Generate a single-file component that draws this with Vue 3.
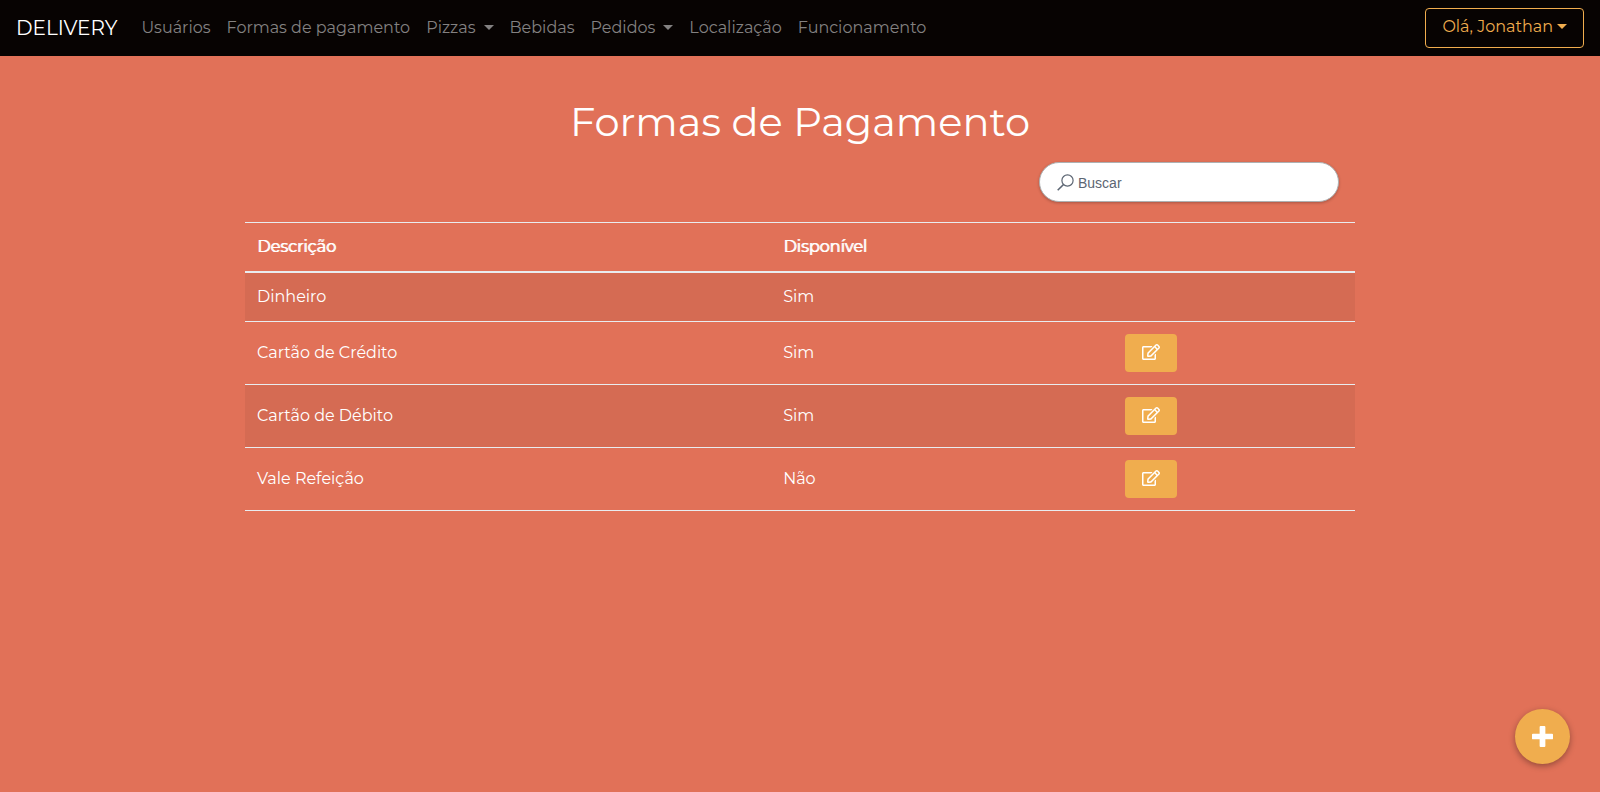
<script setup>
import { ref, computed } from 'vue'

const links = [
  { label: 'Usuários' },
  { label: 'Formas de pagamento' },
  { label: 'Pizzas', menu: true },
  { label: 'Bebidas' },
  { label: 'Pedidos', menu: true },
  { label: 'Localização' },
  { label: 'Funcionamento' },
]

const methods = [
  { name: 'Dinheiro', available: true, editable: false },
  { name: 'Cartão de Crédito', available: true, editable: true },
  { name: 'Cartão de Débito', available: true, editable: true },
  { name: 'Vale Refeição', available: false, editable: true },
]

const search = ref('')
const visible = computed(() =>
  methods.filter((m) => m.name.toLowerCase().includes(search.value.toLowerCase()))
)
</script>

<template>
  <div class="page">
    <header class="navbar">
      <a class="brand" href="#">DELIVERY</a>
      <nav class="links">
        <a v-for="l in links" :key="l.label" class="link" href="#">
          {{ l.label }}<span v-if="l.menu" class="caret"></span>
        </a>
      </nav>
      <button class="user" type="button">Olá, Jonathan<span class="caret"></span></button>
    </header>

    <main class="content">
      <h1>Formas de Pagamento</h1>
      <div class="search-row">
        <label class="search">
          <svg width="17" height="17" viewBox="0 0 17 17" fill="none" stroke="currentColor" stroke-width="1.2" aria-hidden="true">
            <circle cx="10.5" cy="6.5" r="5.6" />
            <path d="M6.5 10.5 0.7 16.3" stroke-width="1.6" />
          </svg>
          <input v-model="search" type="text" placeholder="Buscar" aria-label="Buscar" />
        </label>
      </div>

      <table>
        <thead>
          <tr>
            <th class="name" scope="col">Descrição</th>
            <th class="state" scope="col">Disponível</th>
            <th></th>
          </tr>
        </thead>
        <tbody>
          <tr v-for="m in visible" :key="m.name">
            <td>{{ m.name }}</td>
            <td>{{ m.available ? 'Sim' : 'Não' }}</td>
            <td>
              <button v-if="m.editable" class="edit" type="button" :aria-label="'Editar ' + m.name">
                <svg width="18" height="16" viewBox="0 0 576 512" fill="currentColor" aria-hidden="true">
                  <path d="M402.300 344.900l32-32c5-5 13.700-1.500 13.700 5.700V464c0 26.500-21.500 48-48 48H48c-26.500 0-48-21.500-48-48V112c0-26.500 21.500-48 48-48h273.500c7.100 0 10.700 8.600 5.700 13.700l-32 32c-1.500 1.500-3.500 2.300-5.700 2.300H48v352h352V350.500c0-2.100.8-4.100 2.300-5.600zm156.600-201.800L296.300 405.700l-90.400 10c-26.200 2.900-48.500-19.200-45.600-45.600l10-90.400L432.900 17.100c22.900-22.900 59.900-22.900 82.700 0l43.200 43.200c22.900 22.900 22.900 60 .1 82.800zM460.100 174L402 115.900 216.200 301.800l-7.300 65.300 65.300-7.300L460.100 174zm64.800-79.700l-43.200-43.200c-4.100-4.100-10.800-4.100-14.800 0L436 82l58.100 58.100 30.900-30.900c4-4.200 4-10.800-.1-14.900z" />
                </svg>
              </button>
            </td>
          </tr>
        </tbody>
      </table>
    </main>

    <button class="add" type="button" aria-label="Adicionar forma de pagamento">
      <svg width="21" height="21" viewBox="0 0 22 22" fill="currentColor" aria-hidden="true">
        <path d="M9 0h4q1 0 1 1v7h7q1 0 1 1v4q0 1-1 1h-7v7q0 1-1 1H9q-1 0-1-1v-7H1q-1 0-1-1V9q0-1 1-1h7V1q0-1 1-1z" />
      </svg>
    </button>
  </div>
</template>

<style>
body {
  margin: 0;
  background: #e17158;
}
</style>

<style scoped>
.page {
  min-height: 100vh;
  color: #fff;
  font-family: Montserrat, Inter, "Liberation Sans", sans-serif;
  font-size: 16px;
  line-height: 24px;
}
.page *,
.page *::before {
  box-sizing: border-box;
}
button,
input {
  font: inherit;
}
button {
  cursor: pointer;
}
a {
  text-decoration: none;
}
.navbar {
  display: flex;
  align-items: center;
  padding: 8px 16px;
  background: #070302;
}
.brand {
  margin-right: 16px;
  color: #fff;
  font-size: 20px;
  white-space: nowrap;
}
.links {
  display: flex;
  flex: 1;
}
.link {
  padding: 8px;
  color: #838181;
  white-space: nowrap;
}
.caret {
  display: inline-block;
  margin-left: 8px;
  vertical-align: 3px;
  border: 5px solid transparent;
  border-top-color: currentColor;
  border-bottom: 0;
}
.user {
  height: 40px;
  padding: 0 16px 2px;
  border: 1px solid #f0ad4e;
  border-radius: 4px;
  background: transparent;
  color: #f0ad4e;
}
.user .caret {
  margin-left: 4px;
}
.content {
  box-sizing: border-box;
  max-width: 1140px;
  margin: 0 auto;
  padding: 42px 15px 0;
}
h1 {
  margin: 0 0 16px;
  font-size: 40px;
  font-weight: 400;
  line-height: 48px;
  text-align: center;
}
.search-row {
  display: flex;
  justify-content: flex-end;
  padding-right: 16px;
}
.search {
  display: flex;
  align-items: center;
  gap: 4px;
  width: 300px;
  height: 40px;
  padding: 0 17px;
  border: 1px solid #adb1b3;
  border-radius: 20px;
  background: #fff;
  color: #5c6673;
  box-shadow: 0 1px 3px rgba(0, 0, 0, 0.24);
}
.search input {
  flex: 1;
  min-width: 0;
  padding: 2px 0 0;
  border: 0;
  outline: 0;
  background: transparent;
  color: #495057;
  font-family: "Liberation Sans", sans-serif;
  font-size: 14px;
}
.search input::placeholder {
  color: #5c6673;
  opacity: 1;
}
table {
  width: 100%;
  margin-top: 20px;
  border-spacing: 0;
  table-layout: fixed;
}
.name {
  width: 47.4%;
}
.state {
  width: 30.8%;
}
th,
td {
  padding: 12px;
  border-bottom: 1px solid #e9ecef;
  text-align: left;
}
th {
  border-top: 1px solid #e9ecef;
  border-bottom-width: 2px;
  font-weight: 400;
  text-shadow: 1px 0 0 #fff;
}
tbody tr:nth-child(odd) {
  background: rgba(0, 0, 0, 0.05);
}
.edit {
  display: flex;
  align-items: center;
  justify-content: center;
  width: 52px;
  height: 38px;
  padding: 0 0 2px;
  border: 0;
  border-radius: 4px;
  background: #f0ad4e;
  color: #fff;
}
.add {
  position: fixed;
  right: 30px;
  bottom: 28px;
  display: flex;
  align-items: center;
  justify-content: center;
  width: 55px;
  height: 55px;
  padding: 0;
  border: 0;
  border-radius: 50%;
  background: #f0ad4e;
  color: #fff;
  box-shadow: 0 2px 6px rgba(0, 0, 0, 0.35);
}
</style>
